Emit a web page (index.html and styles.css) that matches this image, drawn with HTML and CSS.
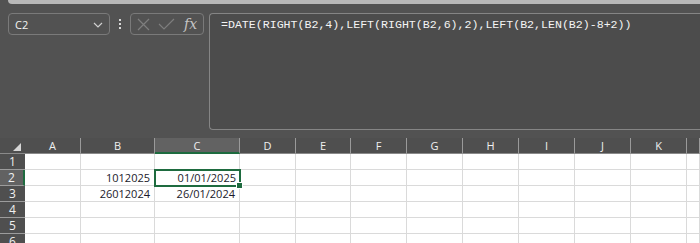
FILE: index.html
```html
<!DOCTYPE html>
<html lang="en">
<head>
    <meta charset="UTF-8">
    <title>Formula - DATE</title>
    <link rel="stylesheet" href="styles.css">
</head>
<body>
    <div class="ribbon-edge"></div>

    <div class="formula-row">
        <div class="name-box">
            <span>C2</span>
            <svg class="chevron" width="10" height="6" viewBox="0 0 10 6"><path d="M1 1 L5 5 L9 1" fill="none" stroke="#d0d0d0" stroke-width="1.2"/></svg>
        </div>
        <div class="dots"><i></i><i></i><i></i></div>
        <div class="fx-box">
            <svg width="13" height="13" viewBox="0 0 13 13"><path d="M1 1 L12 12 M12 1 L1 12" stroke="#7e7e7e" stroke-width="1.2"/></svg>
            <svg width="17" height="13" viewBox="0 0 17 13"><path d="M1 6 L6 11 L16 1" fill="none" stroke="#7e7e7e" stroke-width="1.2"/></svg>
            <span class="fx">fx</span>
        </div>
        <div class="formula-bar">=DATE(RIGHT(B2,4),LEFT(RIGHT(B2,6),2),LEFT(B2,LEN(B2)-8+2))</div>
    </div>

    <div class="sheet">
        <div class="hdr corner"><span class="tri"></span></div>
        <div class="hdr col">A</div>
        <div class="hdr col">B</div>
        <div class="hdr col sel">C</div>
        <div class="hdr col">D</div>
        <div class="hdr col">E</div>
        <div class="hdr col">F</div>
        <div class="hdr col">G</div>
        <div class="hdr col">H</div>
        <div class="hdr col">I</div>
        <div class="hdr col">J</div>
        <div class="hdr col">K</div>
        <div class="hdr col"></div>

        <div class="hdr row">1</div>
        <div class="cell"></div><div class="cell"></div><div class="cell"></div><div class="cell"></div><div class="cell"></div><div class="cell"></div><div class="cell"></div><div class="cell"></div><div class="cell"></div><div class="cell"></div><div class="cell"></div><div class="cell"></div>

        <div class="hdr row sel">2</div>
        <div class="cell"></div><div class="cell num">1012025</div><div class="cell num active">01/01/2025<span class="handle"></span></div><div class="cell"></div><div class="cell"></div><div class="cell"></div><div class="cell"></div><div class="cell"></div><div class="cell"></div><div class="cell"></div><div class="cell"></div><div class="cell"></div>

        <div class="hdr row">3</div>
        <div class="cell"></div><div class="cell num">26012024</div><div class="cell num">26/01/2024</div><div class="cell"></div><div class="cell"></div><div class="cell"></div><div class="cell"></div><div class="cell"></div><div class="cell"></div><div class="cell"></div><div class="cell"></div><div class="cell"></div>

        <div class="hdr row">4</div>
        <div class="cell"></div><div class="cell"></div><div class="cell"></div><div class="cell"></div><div class="cell"></div><div class="cell"></div><div class="cell"></div><div class="cell"></div><div class="cell"></div><div class="cell"></div><div class="cell"></div><div class="cell"></div>

        <div class="hdr row">5</div>
        <div class="cell"></div><div class="cell"></div><div class="cell"></div><div class="cell"></div><div class="cell"></div><div class="cell"></div><div class="cell"></div><div class="cell"></div><div class="cell"></div><div class="cell"></div><div class="cell"></div><div class="cell"></div>

        <div class="hdr row">6</div>
        <div class="cell"></div><div class="cell"></div><div class="cell"></div><div class="cell"></div><div class="cell"></div><div class="cell"></div><div class="cell"></div><div class="cell"></div><div class="cell"></div><div class="cell"></div><div class="cell"></div><div class="cell"></div>
    </div>
</body>
</html>
```

FILE: styles.css
```css
body {
    margin: 0;
    background: #525252;
    font-family: "Open Sans", "Liberation Sans", sans-serif;
    overflow: hidden;
    height: 243px;
}
.ribbon-edge {
    height: 4px;
    margin-left: 8px;
    background: #b8b8b8;
    border-bottom-left-radius: 5px;
}
.formula-row {
    display: flex;
    align-items: flex-start;
    padding: 9px 0 0 8px;
    height: 117px;
}
.name-box {
    box-sizing: border-box;
    width: 102px;
    height: 22px;
    border: 1px solid #7a7a7a;
    border-radius: 4px;
    display: flex;
    align-items: center;
    justify-content: space-between;
    padding: 0 6px 0 6px;
    color: #f2f2f2;
    font-size: 11px;
}
.chevron {
    margin-top: 2px;
}
.dots {
    width: 20px;
    height: 22px;
    display: flex;
    flex-direction: column;
    align-items: center;
    justify-content: center;
    gap: 2px;
}
.dots i {
    width: 2px;
    height: 2px;
    background: #d8d8d8;
}
.fx-box {
    box-sizing: border-box;
    width: 74px;
    height: 22px;
    border: 1px solid #7a7a7a;
    border-radius: 4px;
    display: flex;
    align-items: center;
    padding: 0 4px 0 6px;
    gap: 8px;
}
.fx {
    font-family: "DejaVu Serif", "Liberation Serif", serif;
    font-style: italic;
    color: #c4c4c4;
    font-size: 14px;
    margin-left: 1px;
}
.formula-bar {
    box-sizing: border-box;
    margin-left: 5px;
    flex: 1;
    height: 117px;
    background: #4c4c4c;
    border: 1px solid #858585;
    border-right: none;
    border-radius: 4px 0 0 4px;
    padding: 4px 0 0 11px;
    font-family: "Liberation Mono", "DejaVu Sans Mono", monospace;
    font-size: 11.6px;
    color: #f4f4f4;
}
.sheet {
    margin-top: 8px;
    display: grid;
    grid-template-columns: 25px 56px 74px 85px 56px 55px 56px 56px 56px 56px 56px 56px minmax(0, 1fr);
    grid-auto-rows: 16px;
}
.hdr {
    box-sizing: border-box;
    background: #4f4f4f;
    color: #f0f0f0;
    font-size: 11px;
    display: flex;
    align-items: center;
    justify-content: center;
}
.hdr.col {
    border-right: 1px solid #9a9a9a;
    border-bottom: 1px solid #8a8a8a;
}
.hdr.col.sel {
    background: #626262;
    border-bottom: 2px solid #1e6b3f;
}
.hdr.corner {
    border-bottom: 1px solid #8a8a8a;
    position: relative;
}
.tri {
    position: absolute;
    right: 4px;
    bottom: 2px;
    width: 0;
    height: 0;
    border-left: 8px solid transparent;
    border-bottom: 8px solid #d6d6d6;
}
.hdr.row {
    border-bottom: 1px solid #9c9c9c;
    font-size: 12px;
}
.hdr.row.sel {
    background: #626262;
    border-right: 2px solid #1e6b3f;
}
.cell {
    box-sizing: border-box;
    background: #fff;
    border-right: 1px solid #dadada;
    border-bottom: 1px solid #dadada;
    font-size: 11px;
    color: #1a1a2a;
    display: flex;
    align-items: center;
    justify-content: flex-end;
    padding-right: 4px;
    line-height: 15px;
}
.cell.active {
    position: relative;
    padding-right: 3px;
    outline: 2px solid #1e6b3f;
    outline-offset: -1px;
    z-index: 1;
}
.handle {
    position: absolute;
    right: -4px;
    bottom: -4px;
    width: 5px;
    height: 5px;
    background: #1e6b3f;
    border: 1px solid #fff;
}
```
